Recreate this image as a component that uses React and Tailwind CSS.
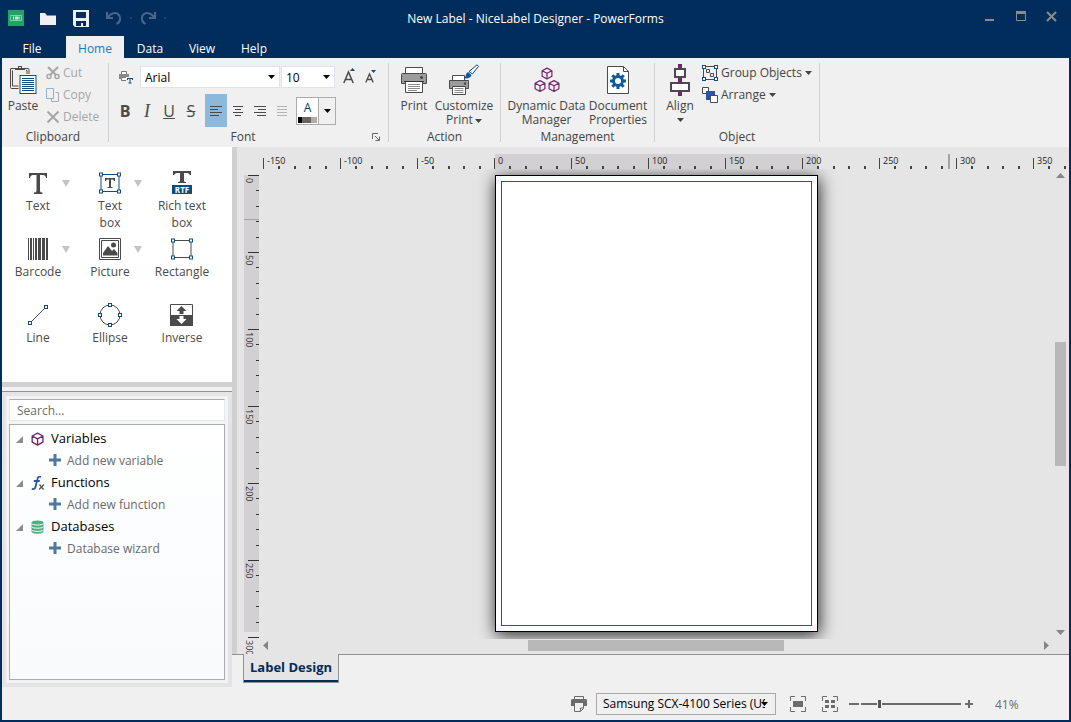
const PX_PER_UNIT = 1.54;
const BLUE = "#0f4c81";
const GRAY = "#4a4a4a";

function Caret({ className = "" }) {
  return (
    <svg className={`inline-block ${className}`} width="7" height="4" viewBox="0 0 7 4" aria-hidden="true">
      <path d="M0 0h7L3.5 4z" fill="currentColor" />
    </svg>
  );
}

function Handle({ x, y }) {
  return <rect x={x - 1.5} y={y - 1.5} width="3" height="3" fill="#fff" stroke={BLUE} />;
}

/* ---------- title bar ---------- */

function TitleBar() {
  return (
    <header className="grid h-9 grid-cols-[1fr_auto_1fr] items-center text-white">
      <div className="flex items-center pl-1.5">
        <svg width="16" height="16" viewBox="0 0 16 16">
          <rect width="16" height="16" fill="#1fa463" />
          <path d="M2.500 5.500h11v5h-11z" fill="none" stroke="#7fd0a6" />
          <path d="M5.500 6.500v3M11 6.500v3" stroke="#fff" />
          <path d="M7 6.500h3v3H7z" fill="#c9ecd9" />
        </svg>
        <button type="button" aria-label="Open" className="ml-4">
          <svg width="16" height="16" viewBox="0 0 16 16">
            <path d="M0 3h5l2 2.500h9V15H0z" fill="#f0f0f0" />
          </svg>
        </button>
        <button type="button" aria-label="Save" className="ml-[17px]">
          <svg width="16" height="17" viewBox="0 0 16 17">
            <path d="M0 0h16v17H2l-2-2z" fill="#f0f0f0" />
            <path d="M3 2h10v6H3zM3 11h10v5h-3v-3H8v3H3z" fill="#002d5b" />
          </svg>
        </button>
        <button type="button" aria-label="Undo" className="ml-[17px]">
          <svg width="16" height="14" viewBox="0 0 16 14" fill="none" stroke="#4a6789" strokeWidth="2">
            <path d="M1 1v6h6M1.500 6.500C5 1.500 10 1 12.500 3.500s2.500 7-2 9.500" />
          </svg>
        </button>
        <span className="ml-2 size-0.5 bg-[#1f4771]" />
        <button type="button" aria-label="Redo" className="ml-2">
          <svg width="16" height="14" viewBox="0 0 16 14" fill="none" stroke="#4a6789" strokeWidth="2">
            <path d="M15 1v6H9M14.500 6.500C11 1.500 6 1 3.500 3.500s-2.500 7 2 9.500" />
          </svg>
        </button>
        <span className="ml-2 size-0.5 bg-[#1f4771]" />
      </div>
      <h1 className="pt-0.5 text-xs">New Label - NiceLabel Designer - PowerForms</h1>
      <div className="flex items-center justify-end gap-5 pr-3 pb-1 text-[#8b8b8b]">
        <button type="button" aria-label="Minimize">
          <svg width="11" height="11" viewBox="0 0 11 11">
            <path d="M1 8h9v2H1z" fill="currentColor" />
          </svg>
        </button>
        <button type="button" aria-label="Maximize">
          <svg width="11" height="11" viewBox="0 0 11 11">
            <path d="M1.500 1v8.500h9V1" fill="none" stroke="currentColor" />
            <path d="M1 0h10v3H1z" fill="currentColor" />
          </svg>
        </button>
        <button type="button" aria-label="Close">
          <svg width="11" height="11" viewBox="0 0 11 11">
            <path d="M1 1l9 9M10 1l-9 9" fill="none" stroke="currentColor" strokeWidth="2" />
          </svg>
        </button>
      </div>
    </header>
  );
}

function RibbonTabs() {
  return (
    <nav className="flex h-[22px] items-stretch pl-1 text-xs text-white">
      <button type="button" className="mr-2 w-[52px] pt-1">File</button>
      <button type="button" className="w-[58px] bg-[#f0f0f0] pt-1 text-[#1979ca]">Home</button>
      <button type="button" className="w-[52px] pt-1">Data</button>
      <button type="button" className="w-[52px] pt-1">View</button>
      <button type="button" className="w-[52px] pt-1">Help</button>
    </nav>
  );
}

/* ---------- ribbon icons ---------- */

function PasteIcon() {
  return (
    <svg width="28" height="32" viewBox="0 0 28 32" fill="none">
      <path d="M6 4.500H2Q1.500 4.500 1.500 5v18.500q0 1 1 1h7M15 4.500h4q1 0 1 1V10" stroke={GRAY} />
      <path d="M4 6.500h-.5v15.500h6M17 6.500h1V10" stroke={GRAY} />
      <path d="M6 6V4h3V2h4v2h3v2z" fill={GRAY} />
      <path d="M10 4V3h2v1z" fill="#fff" />
      <rect x="11" y="11.500" width="16" height="18" fill="#fff" stroke={BLUE} />
      <path d="M13 14.500h12M13 16.500h12M13 18.500h12M13 20.500h12M13 22.500h12M13 24.500h12M13 26.500h12" stroke={BLUE} />
    </svg>
  );
}

function CutIcon() {
  return (
    <svg width="14" height="14" viewBox="0 0 14 14" fill="none" stroke="currentColor" strokeWidth="1.500">
      <path d="M2 1l8 8M12 1L4 9" strokeWidth="2" />
      <circle cx="3" cy="10.500" r="2" />
      <circle cx="11" cy="10.500" r="2" />
    </svg>
  );
}

function CopyIcon() {
  return (
    <svg width="14" height="14" viewBox="0 0 14 14" fill="none">
      <path d="M9.500 4.500h3v9h-7V11" stroke="#aaa" />
      <path d="M.5.5h7v10h-7z" stroke="#8fb0cf" />
    </svg>
  );
}

function DeleteIcon() {
  return (
    <svg width="14" height="14" viewBox="0 0 14 14" fill="none" stroke="currentColor" strokeWidth="2">
      <path d="M1.500 1.500l11 11M12.500 1.500l-11 11" />
    </svg>
  );
}

function FontPrinterIcon() {
  return (
    <svg width="14" height="14" viewBox="0 0 14 14">
      <path d="M2.500 4V1.500h5V4" fill="#fff" stroke="#777" />
      <path d="M0 4h10v5H0z" fill="#888" />
      <path d="M2.500 7.500h5v3h-5z" fill="#fff" stroke="#777" />
      <path d="M7 7h7v7H7z" fill="#f0f0f0" />
      <path d="M8 8.500h6M8.500 8v2M13.500 8v2M11 8v5M9.500 13h3" stroke={BLUE} />
    </svg>
  );
}

function PrinterIcon() {
  return (
    <svg width="28" height="28" viewBox="0 0 28 28">
      <path d="M5.500 8V1.500h17V8" fill="#fff" stroke={GRAY} />
      <path d="M2.500 7.500h23q1 0 1 1v9H1.500v-9q0-1 1-1z" fill="#9c9c9c" stroke={GRAY} />
      <circle cx="21.500" cy="11.500" r="1.500" fill="#444" />
      <path d="M5.500 15.500h17v11h-17z" fill="#fff" stroke={GRAY} />
      <path d="M4 15.500h20" stroke="#333" />
      <path d="M8 18.500h12M8 20.500h12M8 22.500h12M8 24.500h9" stroke="#8a8a8a" />
    </svg>
  );
}

function CustomizePrintIcon() {
  return (
    <svg width="32" height="32" viewBox="0 0 32 32">
      <path d="M4.500 17V11.500h12V17" fill="#fff" stroke={GRAY} />
      <path d="M1.500 16.500h19v8h-19z" fill="#9c9c9c" stroke={GRAY} />
      <circle cx="17" cy="19.500" r="1.200" fill="#444" />
      <path d="M4.500 22.500h13v8h-13z" fill="#fff" stroke={GRAY} />
      <path d="M6.500 24.500h9M6.500 26.500h9M6.500 28.500h9" stroke="#8a8a8a" />
      <path d="M16 14c2.500-1 1-4.500 4-6l3.500 3c-.5 3-4.500 4-7.500 3z" fill="#0f5a9c" />
      <path d="M21 7.500L29 .8l1.500 1.500L24.500 10z" fill="#fff" stroke="#0f4c81" />
    </svg>
  );
}

function Cube({ x, y, s = 1 }) {
  return (
    <path
      transform={`translate(${x} ${y}) scale(${s})`}
      d="M5.500.6l4.900 2.600v5.600l-4.900 2.700L.6 8.800V3.200zM.6 3.200l4.900 2.600 4.900-2.600M5.500 5.800v5.700"
      fill="none"
      stroke="#72246c"
      strokeWidth="1.200"
      strokeLinejoin="round"
    />
  );
}

function DataManagerIcon() {
  return (
    <svg width="28" height="28" viewBox="0 0 28 28">
      <Cube x="8.500" y="1.500" />
      <Cube x="1.500" y="14" />
      <Cube x="15.500" y="14" />
    </svg>
  );
}

function DocumentIcon() {
  return (
    <svg width="24" height="30" viewBox="0 0 24 30">
      <path d="M1.500 1.500h16l5 5v22h-21z" fill="#fff" stroke={GRAY} />
      <path d="M17.500 1.500v5h5" fill="none" stroke={GRAY} />
      <circle cx="12" cy="16" r="4.500" fill="none" stroke="#0f5a9c" strokeWidth="3" />
      <path
        d="M12 8v3M12 21v3M4 16h3M17 16h3M6.300 10.300l2.200 2.200M15.500 19.500l2.200 2.200M17.700 10.300l-2.200 2.200M8.500 19.500l-2.200 2.200"
        stroke="#0f5a9c"
        strokeWidth="3"
      />
    </svg>
  );
}

function AlignIcon() {
  return (
    <svg width="22" height="32" viewBox="0 0 22 32">
      <path d="M11 0v32" stroke="#72246c" strokeWidth="4" />
      <rect x="6" y="5" width="10" height="8" fill="#fff" stroke={GRAY} strokeWidth="2" />
      <rect x="2" y="19" width="18" height="8" fill="#fff" stroke={GRAY} strokeWidth="2" />
    </svg>
  );
}

function GroupIcon() {
  return (
    <svg width="16" height="16" viewBox="0 0 16 16" fill="none">
      <path d="M1.500 1.500h13v13h-13z" stroke={GRAY} />
      <path d="M4.500 4.500h3v3h-3zM8.500 8.500h3v3h-3z" stroke={GRAY} />
      <Handle x={2} y={2} />
      <Handle x={14} y={2} />
      <Handle x={2} y={14} />
      <Handle x={14} y={14} />
    </svg>
  );
}

function ArrangeIcon() {
  return (
    <svg width="16" height="16" viewBox="0 0 16 16">
      <path d="M.5.5h6v6h-6z" fill="#fff" stroke={GRAY} />
      <path d="M4 4h9v9H4z" fill="#2b579a" />
      <path d="M8.500 8.500h7v7h-7z" fill="#fff" stroke={GRAY} />
    </svg>
  );
}

function AlignLines({ d }) {
  return (
    <svg width="14" height="13" viewBox="0 0 14 13" stroke="currentColor">
      <path d={d} />
    </svg>
  );
}

/* ---------- ribbon ---------- */

function RibbonGroup({ title, className = "", children, corner }) {
  return (
    <section className={`flex shrink-0 flex-col ${className}`}>
      <div className="flex min-h-0 flex-1 items-start pt-1">{children}</div>
      <div className="flex h-5 items-center text-center">
        <span className="flex-1">{title}</span>
        {corner}
      </div>
    </section>
  );
}

function Divider() {
  return <div className="my-[5px] w-px shrink-0 bg-[#d0d0d0]" />;
}

function BigButton({ icon, className = "", children }) {
  return (
    <button type="button" className={`mt-0.5 flex shrink-0 flex-col items-center leading-[14px] ${className}`}>
      <span className="mb-[3px] flex h-8 items-center justify-center">{icon}</span>
      {children}
    </button>
  );
}

function FontGroup() {
  const format = "flex h-[33px] w-[22px] items-center justify-center";
  const combo = "h-[22px] appearance-none border border-[#dfe3ee] bg-white pt-0.5 pl-1 text-xs text-black";
  return (
    <RibbonGroup
      title="Font"
      className="w-[279px] pl-[5px]"
      corner={
        <button type="button" aria-label="Font settings" className="mr-2">
          <svg width="8" height="8" viewBox="0 0 8 8" fill="none" stroke="#666">
            <path d="M.5 6V.5H6M3 3l4 4M7.500 3.500v4h-4" />
          </svg>
        </button>
      }
    >
      <div className="flex flex-col pt-0.5">
        <div className="flex h-[30px] items-start pt-0.5">
          <span className="mt-1 ml-[5px] w-[21px]"><FontPrinterIcon /></span>
          <label className="relative flex items-center">
            <select aria-label="Font name" className={`${combo} w-[140px]`} defaultValue="Arial">
              <option>Arial</option>
            </select>
            <Caret className="pointer-events-none absolute right-[5px] text-black" />
          </label>
          <label className="relative ml-px flex items-center">
            <select aria-label="Font size" className={`${combo} w-[54px]`} defaultValue="10">
              <option>10</option>
            </select>
            <Caret className="pointer-events-none absolute right-[5px] text-black" />
          </label>
          <button type="button" aria-label="Increase font size" className="ml-2">
            <svg width="14" height="20" viewBox="0 0 14 20">
              <path d="M.8 17L5.500 6l4.700 11M2.500 13.500h6" fill="none" stroke={GRAY} strokeWidth="1.500" />
              <path d="M7 5h5L9.500 2z" fill={BLUE} />
            </svg>
          </button>
          <button type="button" aria-label="Decrease font size" className="ml-2">
            <svg width="14" height="20" viewBox="0 0 14 20">
              <path d="M.8 16.500L4.500 8l3.700 8.500M2 13.500h5" fill="none" stroke={GRAY} strokeWidth="1.300" />
              <path d="M6 4h5L8.500 7z" fill={BLUE} />
            </svg>
          </button>
        </div>
        <div className="flex items-center text-base text-[#4a4a4a]">
          <button type="button" className={`${format} font-bold`}>B</button>
          <button type="button" className={`${format} font-['Liberation_Serif',serif] text-lg italic`}>I</button>
          <button type="button" className={`${format} underline`}>U</button>
          <button type="button" className={`${format} mr-[3px] line-through`}>S</button>
          <button type="button" aria-label="Align left" className={`${format} bg-[#8cb8dc]`}>
            <AlignLines d="M1 2.500h12M1 5.500h8M1 8.500h12M1 11.500h9" />
          </button>
          <button type="button" aria-label="Align center" className={format}>
            <AlignLines d="M2 2.500h10M4 5.500h6M2 8.500h10M4 11.500h6" />
          </button>
          <button type="button" aria-label="Align right" className={format}>
            <AlignLines d="M1 2.500h12M5 5.500h8M1 8.500h12M4 11.500h9" />
          </button>
          <button type="button" aria-label="Justify" className={`${format} text-[#b4b4b4]`}>
            <AlignLines d="M2 2.500h10M2 5.500h10M2 8.500h10M2 11.500h10" />
          </button>
          <div className="ml-[3px] flex h-7 w-10 border border-[#acacac]">
            <button type="button" aria-label="Font color" className="flex w-[21px] flex-col items-center bg-white px-px text-xs leading-[19px] text-[#003a70]">
              A
              <span className="flex h-1.5 w-full">
                <span className="w-1 bg-black" />
                <span className="flex-1 bg-[#6b6363]" />
                <span className="w-1.5 bg-[#b3aaaa]" />
              </span>
            </button>
            <button type="button" aria-label="More colors" className="flex flex-1 items-center justify-center border-l border-[#acacac] text-black">
              <Caret />
            </button>
          </div>
        </div>
      </div>
    </RibbonGroup>
  );
}

function Ribbon() {
  const small = "flex h-[22px] items-center gap-[3px] whitespace-nowrap";
  return (
    <div className="flex h-[89px] overflow-hidden bg-[#f0f0f0] text-xs text-[#444]">
      <RibbonGroup title="Clipboard" className="w-[106px] pr-1">
        <BigButton icon={<PasteIcon />} className="w-[42px]">Paste</BigButton>
        <div className="ml-0.5 flex flex-col text-[#a6a6a6]">
          <button type="button" disabled className={small}><CutIcon />Cut</button>
          <button type="button" disabled className={small}><CopyIcon />Copy</button>
          <button type="button" disabled className={small}><DeleteIcon />Delete</button>
        </div>
      </RibbonGroup>
      <Divider />
      <FontGroup />
      <Divider />
      <RibbonGroup title="Action" className="w-[111px]">
        <BigButton icon={<PrinterIcon />} className="w-[50px]">Print</BigButton>
        <BigButton icon={<CustomizePrintIcon />} className="w-[50px]">
          <span>Customize Print<Caret className="ml-0.5" /></span>
        </BigButton>
      </RibbonGroup>
      <Divider />
      <RibbonGroup title="Management" className="w-[153px]">
        <BigButton icon={<DataManagerIcon />} className="w-[91px]">
          <span>Dynamic Data Manager</span>
        </BigButton>
        <BigButton icon={<DocumentIcon />} className="w-[52px]">
          <span>Document Properties</span>
        </BigButton>
      </RibbonGroup>
      <Divider />
      <RibbonGroup title="Object" className="w-[164px]">
        <BigButton icon={<AlignIcon />} className="w-[47px] pl-[3px]">
          <span>Align</span>
          <Caret className="mt-[5px]" />
        </BigButton>
        <div className="flex flex-col">
          <button type="button" className={small}><GroupIcon />Group Objects<Caret /></button>
          <button type="button" className={small}><ArrangeIcon />Arrange<Caret /></button>
        </div>
      </RibbonGroup>
      <Divider />
    </div>
  );
}

/* ---------- toolbox ---------- */

const TOOLS = [
  {
    name: "Text",
    menu: true,
    icon: <path d="M3 2h18v5h-1q-.5-3-3-3h-3v16q0 1.500 2.500 1.500V23H8v-1.500q2.500 0 2.500-1.500V4H7Q4.500 4 4 7H3z" fill={GRAY} />,
  },
  {
    name: "Text\nbox",
    menu: true,
    icon: (
      <>
        <path d="M3 3.500h18v17H3z" fill="none" stroke={BLUE} />
        <path d="M7 7h10v3h-1q0-1.500-1.500-1.500H13v7.500h1.500v1h-5v-1H11V8.500H9.500Q8 8.500 8 10H7z" fill={GRAY} />
        <Handle x={3} y={3.5} /><Handle x={21} y={3.5} /><Handle x={3} y={20.5} /><Handle x={21} y={20.5} />
      </>
    ),
  },
  {
    name: "Rich text\nbox",
    icon: (
      <>
        <path d="M3 0h18v4h-1q-1-2-3-2h-3v8q0 1 2 1v1H8v-1q2 0 2-1V2H7Q5 2 4 4H3z" fill={GRAY} />
        <path d="M2 14h20v9H2z" fill={BLUE} />
        <text x="12" y="21.5" textAnchor="middle" fill="#fff" className="text-[8px] font-bold">RTF</text>
      </>
    ),
  },
  {
    name: "Barcode",
    menu: true,
    icon: <path d="M2 1h1v22H2zM4 1h2v22H4zM7 1h1v22H7zM9 1h2v22H9zM12 1h3v22h-3zM16 1h3v22h-3zM20 1h2v22h-2z" fill={GRAY} />,
  },
  {
    name: "Picture",
    menu: true,
    icon: (
      <>
        <path d="M1.500 1.500h21v21h-21z" fill="none" stroke={GRAY} />
        <path d="M3.500 3.500h17v17h-17z" fill="none" stroke={GRAY} />
        <path d="M5 18.500V16l5-7 4 5 2-2 3.500 4v2.500z" fill={GRAY} />
        <circle cx="15.500" cy="8" r="2.500" fill={GRAY} />
      </>
    ),
  },
  {
    name: "Rectangle",
    icon: (
      <>
        <path d="M3 3.500h18v17H3z" fill="none" stroke={GRAY} />
        <Handle x={3} y={3.5} /><Handle x={21} y={3.5} /><Handle x={3} y={20.5} /><Handle x={21} y={20.5} />
      </>
    ),
  },
  {
    name: "Line",
    icon: (
      <>
        <path d="M4 20L20 4" stroke={GRAY} />
        <Handle x={4} y={20} /><Handle x={20} y={4} />
      </>
    ),
  },
  {
    name: "Ellipse",
    icon: (
      <>
        <circle cx="12" cy="12" r="10" fill="none" stroke={GRAY} />
        <Handle x={12} y={2} /><Handle x={22} y={12} /><Handle x={12} y={22} /><Handle x={2} y={12} />
      </>
    ),
  },
  {
    name: "Inverse",
    icon: (
      <>
        <path d="M.5 1.500h22v21H.5z" fill="#fff" stroke={GRAY} />
        <path d="M0 12h23v11H0z" fill={GRAY} />
        <path d="M11.500 3l5 5h-3v3h-4V8h-3z" fill={GRAY} />
        <path d="M11.500 21l5-5h-3v-3h-4v3h-3z" fill="#fff" />
      </>
    ),
  },
];

function Toolbox() {
  return (
    <div className="grid h-[235px] auto-rows-[66px] grid-cols-[repeat(3,72px)] bg-white pt-6 text-xs leading-[17px] text-[#4a4a4a]">
      {TOOLS.map((tool) => (
        <button key={tool.name} type="button" className="flex flex-col items-center">
          <span className="mb-0.5 grid w-full grid-cols-[1fr_auto_1fr] items-center">
            <svg className="col-start-2" width="24" height="24" viewBox="0 0 24 24">{tool.icon}</svg>
            {tool.menu && (
              <svg className="mr-1 justify-self-end" width="8" height="7" viewBox="0 0 8 7">
                <path d="M0 0h8L4 7z" fill="#c3c3c3" />
              </svg>
            )}
          </span>
          <span className="whitespace-pre-line">{tool.name}</span>
        </button>
      ))}
    </div>
  );
}

/* ---------- data explorer ---------- */

const TREE = [
  {
    name: "Variables",
    action: "Add new variable",
    icon: <Cube x="0.500" y="0.500" s={1.1} />,
  },
  {
    name: "Functions",
    action: "Add new function",
    icon: (
      <>
        <path d="M10 .8C7.500 0 6.700 1.500 6.200 4L4.600 10.500C4.200 12.700 3 13.500.8 12.800M2.800 5h6" fill="none" stroke="#2b579a" strokeWidth="1.800" />
        <path d="M8.500 8.500l4 5M13 8.500l-5 5" stroke="#555" strokeWidth="1.300" />
      </>
    ),
  },
  {
    name: "Databases",
    action: "Database wizard",
    icon: (
      <>
        <path d="M.5 2.500v9c0 3 12 3 12 0v-9z" fill="#4fae84" />
        <ellipse cx="6.500" cy="2.500" rx="6" ry="2" fill="#4fae84" />
        <path d="M.5 3.500c1 2 11 2 12 0M.5 6.700c1 2 11 2 12 0M.5 9.900c1 2 11 2 12 0" fill="none" stroke="#fff" />
      </>
    ),
  },
];

function Explorer() {
  return (
    <div className="flex flex-1 flex-col border-t border-[#919191] bg-[#e4e4e4] p-1">
      <div className="flex flex-1 flex-col gap-[3px] bg-[#f3f3f3] p-[3px]">
        <input
          type="search"
          aria-label="Search"
          placeholder="Search..."
          className="h-[22px] w-full border border-[#e3e9ef] border-t-[#abadb3] bg-white px-[7px] text-xs placeholder:text-[#6d6d6d]"
        />
        <ul className="flex-1 border border-[#a9abb0] bg-gradient-to-b from-white to-[#f8fafc] pt-[3px]">
          {TREE.map((node) => (
            <li key={node.name}>
              <button type="button" className="flex h-[22px] items-center pl-1.5 text-[13px] text-black">
                <svg width="7" height="7" viewBox="0 0 7 7"><path d="M7 0v7H0z" fill="#8c8c8c" /></svg>
                <svg className="mr-1.5 ml-2" width="14" height="14" viewBox="0 0 14 14">{node.icon}</svg>
                {node.name}
              </button>
              <button type="button" className="flex h-[22px] items-center gap-1.5 pl-[39px] text-xs text-[#6a6a6a]">
                <svg width="12" height="14" viewBox="0 0 12 14"><path d="M6 0v12M0 6h12" stroke="#4f779f" strokeWidth="3" /></svg>
                {node.action}
              </button>
            </li>
          ))}
        </ul>
      </div>
    </div>
  );
}

/* ---------- workspace ---------- */

function range(from, to) {
  return Array.from({ length: to - from + 1 }, (_, i) => from + i);
}

function HorizontalRuler() {
  return (
    <svg width="100%" height="15" className="overflow-visible" aria-hidden="true">
      <svg x="50%" className="overflow-visible">
        <g transform="translate(-161 0)">
          <rect width="323" height="15" fill="#d2d0d2" />
          {range(-15, 37).map((i) => {
            const x = Math.round(i * 10 * PX_PER_UNIT);
            const major = i % 5 === 0;
            return <rect key={i} x={x - 1} y={major ? 4 : 12} width={major ? 1 : 2} height={major ? 11 : 3} fill="#444" />;
          })}
          {range(-3, 7).map((i) => (
            <text key={i} x={i * 50 * PX_PER_UNIT + 3} y="10" className="fill-[#222] text-[9px]">{i * 50}</text>
          ))}
          <rect x="453" width="2" height="15" fill="#a3a3a3" />
        </g>
      </svg>
    </svg>
  );
}

function VerticalRuler() {
  return (
    <svg width="15" height="485" aria-hidden="true">
      <g transform="translate(0 6)">
        <rect width="15" height="457" fill="#d2d0d2" />
        {range(0, 30).map((i) => {
          const major = i % 5 === 0;
          return <rect key={i} x={major ? 4 : 12} y={Math.round(i * 10 * PX_PER_UNIT)} width={major ? 11 : 3} height="1" fill="#333" />;
        })}
        {range(0, 6).map((i) => (
          <text key={i} transform={`translate(2 ${i * 50 * PX_PER_UNIT + 3}) rotate(90)`} className="fill-[#333] text-[9px]">{i * 50}</text>
        ))}
        <rect y="44" width="15" height="1" fill="#a3a3a3" />
      </g>
    </svg>
  );
}

function Workspace() {
  return (
    <div className="grid flex-1 grid-cols-[7px_15px_1fr_16px] grid-rows-[7px_15px_1fr_15px] overflow-hidden bg-[#e5e5e5]">
      <div className="col-start-3 row-start-2"><HorizontalRuler /></div>
      <div className="col-start-2 row-span-2 row-start-3 overflow-hidden"><VerticalRuler /></div>
      <div className="col-start-3 row-start-3 flex items-start justify-center overflow-hidden pt-1.5">
        <div className="h-[457px] w-[323px] border border-black bg-white p-[5px] shadow-[1px_3px_16px_rgba(0,0,0,0.85)]">
          <div className="h-full border border-[#ff0000]" />
        </div>
      </div>
      <div className="col-start-4 row-start-3 flex flex-col items-center pt-1 pr-0.5 pb-1">
        <svg width="9" height="5" viewBox="0 0 9 5"><path d="M0 5h9L4.500 0z" fill="#868686" /></svg>
        <div className="flex flex-1 flex-col">
          <span className="grow-[164]" />
          <span className="w-[11px] grow-[124] bg-[#b8b8b8]" />
          <span className="grow-[164]" />
        </div>
        <svg width="9" height="5" viewBox="0 0 9 5"><path d="M0 0h9L4.500 5z" fill="#868686" /></svg>
      </div>
      <div className="col-start-3 row-start-4 flex items-center px-1 pb-0.5">
        <svg width="5" height="9" viewBox="0 0 5 9"><path d="M5 0v9L0 4.500z" fill="#868686" /></svg>
        <span className="grow-[260]" />
        <span className="h-[11px] grow-[257] bg-[#b8b8b8]" />
        <span className="grow-[260]" />
        <svg width="5" height="9" viewBox="0 0 5 9"><path d="M0 0v9l5-4.500z" fill="#868686" /></svg>
      </div>
    </div>
  );
}

function DesignTabs() {
  return (
    <div className="flex h-[33px] items-start">
      <span className="w-[11px] border-t border-[#919191]" />
      <button type="button" className="h-[29px] w-24 border-x border-b border-[#919191] bg-[#e5e5e5]">
        <span className="flex h-full items-center justify-center border-b-2 border-[#002d5b] pt-0.5 text-[13px] font-bold whitespace-nowrap text-[#002d5b]">
          Label Design
        </span>
      </button>
      <span className="flex-1 border-t border-[#919191]" />
    </div>
  );
}

/* ---------- status bar ---------- */

const THUMB =
  "[&::-webkit-slider-thumb]:mt-[-3px] [&::-webkit-slider-thumb]:h-2 [&::-webkit-slider-thumb]:w-[5px] [&::-webkit-slider-thumb]:appearance-none [&::-webkit-slider-thumb]:border-x [&::-webkit-slider-thumb]:border-[#f0f0f0] [&::-webkit-slider-thumb]:bg-[#555]";
const TRACK =
  "[&::-webkit-slider-runnable-track]:h-0.5 [&::-webkit-slider-runnable-track]:bg-[#6b6b6b]";

function StatusBar() {
  return (
    <footer className="flex h-[33px] items-center justify-end pr-[52px] text-xs">
      <svg width="16" height="16" viewBox="0 0 16 16">
        <path d="M3.500 3V.5h9V3" fill="none" stroke="#6b6b6b" />
        <path d="M1 3h14l1 1v6h-3V7H3v3H0V4z" fill="#6b6b6b" />
        <path d="M3.500 7v8.500h6l3-3V7M9.500 15v-3h3" fill="none" stroke="#6b6b6b" />
      </svg>
      <label className="relative ml-[9px] flex items-center">
        <select
          aria-label="Printer"
          defaultValue="samsung"
          className="h-[22px] w-[180px] appearance-none border border-[#a9a9a9] bg-[#f0f0f0] pr-2.5 pl-1.5 text-xs text-black"
        >
          <option value="samsung">Samsung SCX-4100 Series (USB001)</option>
        </select>
        <Caret className="pointer-events-none absolute right-2 text-black" />
      </label>
      <button type="button" aria-label="Zoom to label" className="ml-3.5">
        <svg width="16" height="16" viewBox="0 0 16 16" fill="none" stroke="#6b6b6b">
          <path d="M.5 5V.5H5M11 .5h4.500V5M15.500 11v4.500H11M5 15.500H.5V11" />
          <path d="M3 5h10v6H3z" fill="#6b6b6b" stroke="none" />
        </svg>
      </button>
      <button type="button" aria-label="Zoom to objects" className="ml-4">
        <svg width="16" height="16" viewBox="0 0 16 16" fill="none" stroke="#6b6b6b">
          <path d="M.5 5V.5H5M11 .5h4.500V5M15.500 11v4.500H11M5 15.500H.5V11" />
          <path d="M3 4h4v3H3zM9 4h4v3H9zM3 9h4v3H3zM9 9h4v3H9z" fill="#6b6b6b" stroke="none" />
        </svg>
      </button>
      <button type="button" aria-label="Zoom out" className="mr-0.5 ml-[11px]">
        <svg width="10" height="2"><path d="M0 0h10v2H0z" fill="#6b6b6b" /></svg>
      </button>
      <input type="range" aria-label="Zoom" min="0" max="100" defaultValue="17" className={`w-[100px] appearance-none bg-transparent ${TRACK} ${THUMB}`} />
      <button type="button" aria-label="Zoom in" className="ml-1">
        <svg width="8" height="8"><path d="M4 0v8M0 4h8" stroke="#6b6b6b" strokeWidth="2" /></svg>
      </button>
      <span className="ml-[22px] w-[22px] pt-0.5 text-[#6b6b6b]">41%</span>
    </footer>
  );
}

export default function App() {
  return (
    <div className="flex min-h-screen flex-col border-x-2 border-b-2 border-[#002d5b] bg-[#002d5b] font-['Open_Sans','Noto_Sans',sans-serif]">
      <TitleBar />
      <RibbonTabs />
      <Ribbon />
      <main className="flex flex-1 bg-[#f0f0f0]">
        <aside className="flex w-[230px] shrink-0 flex-col">
          <Toolbox />
          <div className="mb-1 h-[5px] bg-[#d0d0d0]" />
          <Explorer />
        </aside>
        <div className="flex min-w-0 flex-1 flex-col">
          <div className="flex flex-1">
            <div className="w-[5px] shrink-0 bg-[#d0d0d0]" />
            <Workspace />
          </div>
          <DesignTabs />
        </div>
      </main>
      <div className="bg-[#f0f0f0]">
        <StatusBar />
      </div>
    </div>
  );
}
